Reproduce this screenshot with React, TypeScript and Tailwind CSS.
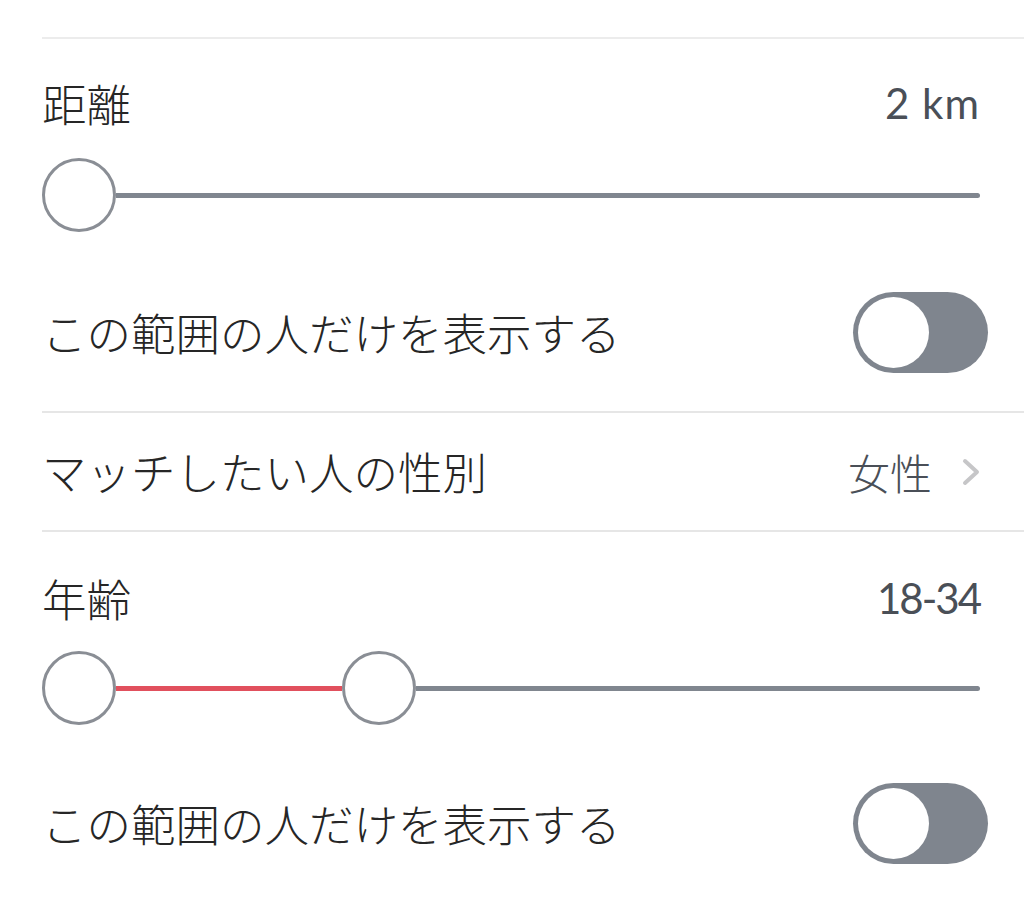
import React from "react";

const jp = "font-['Noto_Sans_CJK_JP',sans-serif]";
const num = "font-['Lato','Noto_Sans_CJK_JP',sans-serif]";

function Thumb() {
    return <div className="h-[74px] w-[74px] shrink-0 rounded-full border-[3px] border-[#8a8e95] bg-white" />;
}

function Toggle() {
    return (
        <div className="-mr-[8px] flex h-[81px] w-[135px] shrink-0 items-center rounded-full bg-[#7f858e] pl-[5px]">
            <div className="h-[71px] w-[71px] rounded-full bg-white" />
        </div>
    );
}

function Row({ label, right, className }: { label: string; right: React.ReactNode; className: string }) {
    return (
        <div className={"flex items-center justify-between " + className}>
            <span className={`${jp} text-[44.5px] font-light leading-none text-[#262626]`}>{label}</span>
            {right}
        </div>
    );
}

export default function App() {
    return (
        <div className="h-[901px] w-full overflow-hidden bg-white">
            <div className="ml-[42px]">
                <div className="h-[39px] border-b-2 border-[#ececec]" />

                {/* 距離 */}
                <div className="border-b-2 border-[#e6e6e6] pr-[44px]">
                    <Row
                        label="距離"
                        className="h-[128px]"
                        right={<span className={`${num} text-[42px] leading-none tracking-[1px] text-[#4a4f57]`}>2 km</span>}
                    />
                    <div className="flex h-[56px] items-center">
                        <Thumb />
                        <div className="h-[5px] flex-1 rounded-r-full bg-[#80868f]" />
                    </div>
                    <Row label="この範囲の人だけを表示する" className="mt-[69px] mb-[38px] h-[81px]" right={<Toggle />} />
                </div>

                {/* 性別 */}
                <div className="border-b-2 border-[#e6e6e6] pr-[44px]">
                    <Row
                        label="マッチしたい人の性別"
                        className="h-[117px]"
                        right={
                            <div className="flex items-center gap-[30px]">
                                <span className={`${jp} text-[42px] font-light leading-none text-[#4a4f57]`}>女性</span>
                                <svg width="18" height="28" viewBox="0 0 18 28" fill="none">
                                    <path d="M3 3l12 11L3 25" stroke="#c6c6c8" strokeWidth="4" strokeLinecap="round" strokeLinejoin="round" />
                                </svg>
                            </div>
                        }
                    />
                </div>

                {/* 年齢 */}
                <div className="pr-[44px]">
                    <Row
                        label="年齢"
                        className="h-[132px]"
                        right={<span className={`${num} text-[42px] leading-none tracking-[-2px] text-[#4a4f57]`}>18-34</span>}
                    />
                    <div className="flex h-[48px] items-center">
                        <Thumb />
                        <div className="h-[5px] w-[226px] bg-[#e1505d]" />
                        <Thumb />
                        <div className="h-[5px] flex-1 rounded-r-full bg-[#80868f]" />
                    </div>
                    <Row label="この範囲の人だけを表示する" className="mt-[71px] h-[81px]" right={<Toggle />} />
                </div>
            </div>
        </div>
    );
}
